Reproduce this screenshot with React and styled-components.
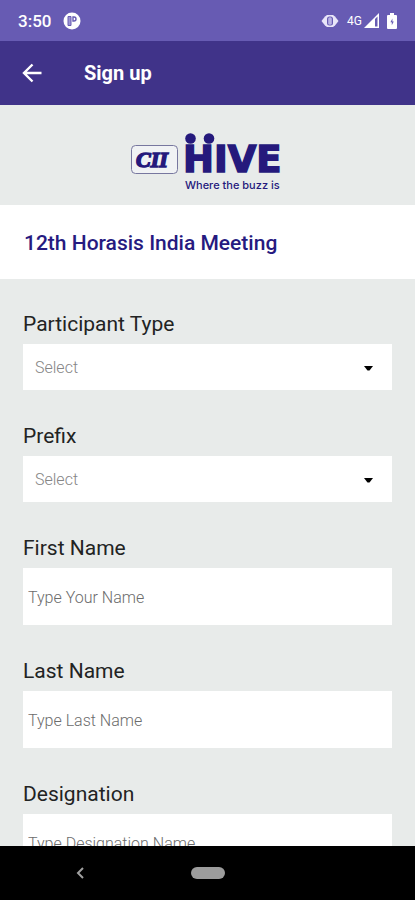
import React, { Component } from 'react'
import styled, { createGlobalStyle, css, ThemeProvider } from 'styled-components'

const theme = {
  font: "Roboto, 'Noto Sans', sans-serif",
  colors: {
    status: '#675bb3',
    primary: '#403389',
    brand: '#25197c',
    title: '#261a80',
    background: '#e8ebea',
    text: '#222323',
    placeholder: '#6c6c6c',
    muted: '#858585',
  },
}

const GlobalStyle = createGlobalStyle`
  * {
    box-sizing: border-box;
  }
  body {
    margin: 0;
    font-family: ${props => props.theme.font};
  }
`

const Screen = styled.div`
  display: flex;
  flex-direction: column;
  height: 100vh;
  overflow: hidden;
  background-color: ${props => props.theme.colors.background};
`

const StatusBar = styled.div`
  display: flex;
  flex-shrink: 0;
  align-items: center;
  justify-content: space-between;
  height: 41px;
  padding: 0 18px;
  color: white;
  background-color: ${props => props.theme.colors.status};
`

const StatusGroup = styled.div`
  display: flex;
  align-items: center;
  gap: ${props => props.$gap}px;
`

const Clock = styled.span`
  font-size: 17px;
  font-weight: 500;
`

const Network = styled.span`
  font-size: 12px;
`

const AppBar = styled.header`
  display: flex;
  flex-shrink: 0;
  align-items: center;
  gap: 40px;
  height: 64px;
  padding: 0 20px;
  color: white;
  background-color: ${props => props.theme.colors.primary};
`

const resetButton = css`
  display: flex;
  padding: 0;
  border: 0;
  color: inherit;
  background: none;
`

const IconButton = styled.button`
  ${resetButton}
`

const AppBarTitle = styled.h1`
  margin: 0;
  font-size: 20px;
  font-weight: 700;
`

const Content = styled.main`
  flex: 1;
  min-height: 0;
  overflow: hidden;
`

const LogoBanner = styled.div`
  display: flex;
  justify-content: center;
  padding: 24px 0 12px;
`

const EventTitle = styled.h2`
  margin: 0;
  padding: 25px 24px 23px;
  font-size: 21px;
  font-weight: 500;
  line-height: 26px;
  color: ${props => props.theme.colors.title};
  background-color: white;
`

const Form = styled.form`
  display: flex;
  flex-direction: column;
  gap: 34px;
  padding: 33px 23px;
`

const Field = styled.div`
  display: flex;
  flex-direction: column;
  gap: 8px;
`

const Label = styled.label`
  font-size: 21px;
  line-height: 24px;
  color: ${props => props.theme.colors.text};
`

const controlStyle = css`
  width: 100%;
  border: 0;
  border-radius: 0;
  outline: none;
  font-family: inherit;
  font-size: 16px;
  font-weight: 300;
  background-color: white;
`

const Input = styled.input`
  ${controlStyle}
  height: 57px;
  padding: 1px 5px 0;
  color: ${props => props.theme.colors.text};
  &::placeholder {
    color: ${props => props.theme.colors.placeholder};
    opacity: 1;
  }
`

const SelectWrapper = styled.div`
  display: flex;
  position: relative;
`

const Select = styled.select`
  ${controlStyle}
  appearance: none;
  height: 46px;
  padding: 0 40px 0 12px;
  color: ${props => props.theme.colors.muted};
`

const Caret = styled.svg`
  position: absolute;
  top: 22px;
  right: 19px;
  pointer-events: none;
`

const NavBar = styled.nav`
  display: grid;
  flex-shrink: 0;
  grid-template-columns: 1fr 34px 1fr;
  align-items: center;
  height: 54px;
  color: #a0a0a0;
  background-color: black;
`

const NavBack = styled.button`
  ${resetButton}
  justify-self: center;
  margin-right: 30px;
`

const HomePill = styled.button`
  ${resetButton}
  height: 12px;
  border-radius: 6px;
  background-color: #9c9c9c;
`

const AppBadge = () => (
  <svg width='18' height='18' viewBox='0 0 18 18'>
    <circle cx='9' cy='9' r='8.5' fill='white' />
    <path d='M5 4.5h3v9H5z' fill='#9d94d2' stroke={theme.colors.status} />
    <path
      d='M10 5h1a2 2 0 0 1 0 4h-1z'
      fill='none'
      stroke={theme.colors.status}
      strokeWidth='1.4'
    />
  </svg>
)

const EyeIcon = () => (
  <svg width='18' height='14' viewBox='0 0 18 14'>
    <path d='M0.5 7L4 2.5 6 1h6l2 1.5L17.5 7 14 11.5 12 13H6l-2-1.5z' fill='#e8e5f8' />
    <rect x='6' y='2.5' width='6' height='9' rx='2.5' fill={theme.colors.status} />
    <rect x='7.2' y='3.2' width='3.6' height='7.6' rx='1.5' fill='#b9b2e4' />
  </svg>
)

const SignalIcon = () => (
  <svg width='15' height='15' viewBox='0 0 15 15'>
    <path d='M0 15L15 0v15z' fill='white' />
    <path d='M11 6L13.5 3.5v10H11z' fill={theme.colors.status} />
  </svg>
)

const BatteryIcon = () => (
  <svg width='10' height='16' viewBox='0 0 10 16'>
    <path d='M3 0h4v2h2a1 1 0 0 1 1 1v12a1 1 0 0 1-1 1H1a1 1 0 0 1-1-1V3a1 1 0 0 1 1-1h2z' fill='white' />
    <path d='M5.4 5.5L3.4 9.2h1.4v3l2-3.6H5.4z' fill={theme.colors.status} />
  </svg>
)

const BackArrow = () => (
  <svg width='24' height='24' viewBox='0 0 24 24' fill='none' stroke='currentColor' strokeWidth='2.4'>
    <path d='M21.5 12H4.5M12.5 3.5L4 12l8.5 8.5' />
  </svg>
)

const HiveLogo = () => (
  <svg width='156' height='64' viewBox='0 0 156 64' fill={theme.colors.brand}>
    <rect x='1.5' y='16.5' width='46' height='28' rx='4' fill='#f0f2f4' stroke='#77779f' />
    <text x='6' y='38' fontFamily='Liberation Serif, serif' fontSize='22' fontWeight='700' fontStyle='italic' stroke={theme.colors.brand} strokeWidth='1.5'>
      CII
    </text>
    <circle cx='60.5' cy='9.5' r='5.3' />
    <circle cx='79' cy='9.5' r='5.3' />
    <text x='53' y='43' fontFamily='DejaVu Sans, sans-serif' fontSize='37' fontWeight='700' stroke={theme.colors.brand} strokeWidth='1.5'>
      HIVE
    </text>
    <text x='55' y='60' fontFamily='Inter, sans-serif' fontSize='11' fontWeight='500'>
      Where the buzz is
    </text>
  </svg>
)

const fields = [
  { id: 'participantType', label: 'Participant Type', type: 'select' },
  { id: 'prefix', label: 'Prefix', type: 'select' },
  { id: 'firstName', label: 'First Name', placeholder: 'Type Your Name' },
  { id: 'lastName', label: 'Last Name', placeholder: 'Type Last Name' },
  { id: 'designation', label: 'Designation', placeholder: 'Type Designation Name' },
]

export default class SignUp extends Component {
  state = {}

  onChange = event => {
    const { name, value } = event.target
    this.setState({ [name]: value })
  }

  renderControl({ id, type, placeholder }) {
    if (type === 'select') {
      return (
        <SelectWrapper>
          <Select id={id} name={id} value={this.state[id] || ''} onChange={this.onChange}>
            <option value=''>Select</option>
          </Select>
          <Caret width='9' height='5' viewBox='0 0 9 5'>
            <path d='M0 0h9L5.5 4.5h-2z' />
          </Caret>
        </SelectWrapper>
      )
    }
    return (
      <Input
        id={id}
        type='text'
        name={id}
        placeholder={placeholder}
        value={this.state[id] || ''}
        onChange={this.onChange}
      />
    )
  }

  render() {
    return (
      <ThemeProvider theme={theme}>
        <GlobalStyle />
        <Screen>
          <StatusBar>
            <StatusGroup $gap={12}>
              <Clock>3:50</Clock>
              <AppBadge />
            </StatusGroup>
            <StatusGroup $gap={8}>
              <EyeIcon />
              <StatusGroup $gap={2}>
                <Network>4G</Network>
                <SignalIcon />
              </StatusGroup>
              <BatteryIcon />
            </StatusGroup>
          </StatusBar>
          <AppBar>
            <IconButton type='button' aria-label='Back'>
              <BackArrow />
            </IconButton>
            <AppBarTitle>Sign up</AppBarTitle>
          </AppBar>
          <Content>
            <LogoBanner>
              <HiveLogo />
            </LogoBanner>
            <EventTitle>12th Horasis India Meeting</EventTitle>
            <Form>
              {fields.map(field => (
                <Field key={field.id}>
                  <Label htmlFor={field.id}>{field.label}</Label>
                  {this.renderControl(field)}
                </Field>
              ))}
            </Form>
          </Content>
          <NavBar>
            <NavBack type='button' aria-label='Back'>
              <svg width='8' height='12' viewBox='0 0 8 12' fill='none' stroke='currentColor' strokeWidth='2'>
                <path d='M7 1L2 6l5 5' />
              </svg>
            </NavBack>
            <HomePill type='button' aria-label='Home' />
          </NavBar>
        </Screen>
      </ThemeProvider>
    )
  }
}
